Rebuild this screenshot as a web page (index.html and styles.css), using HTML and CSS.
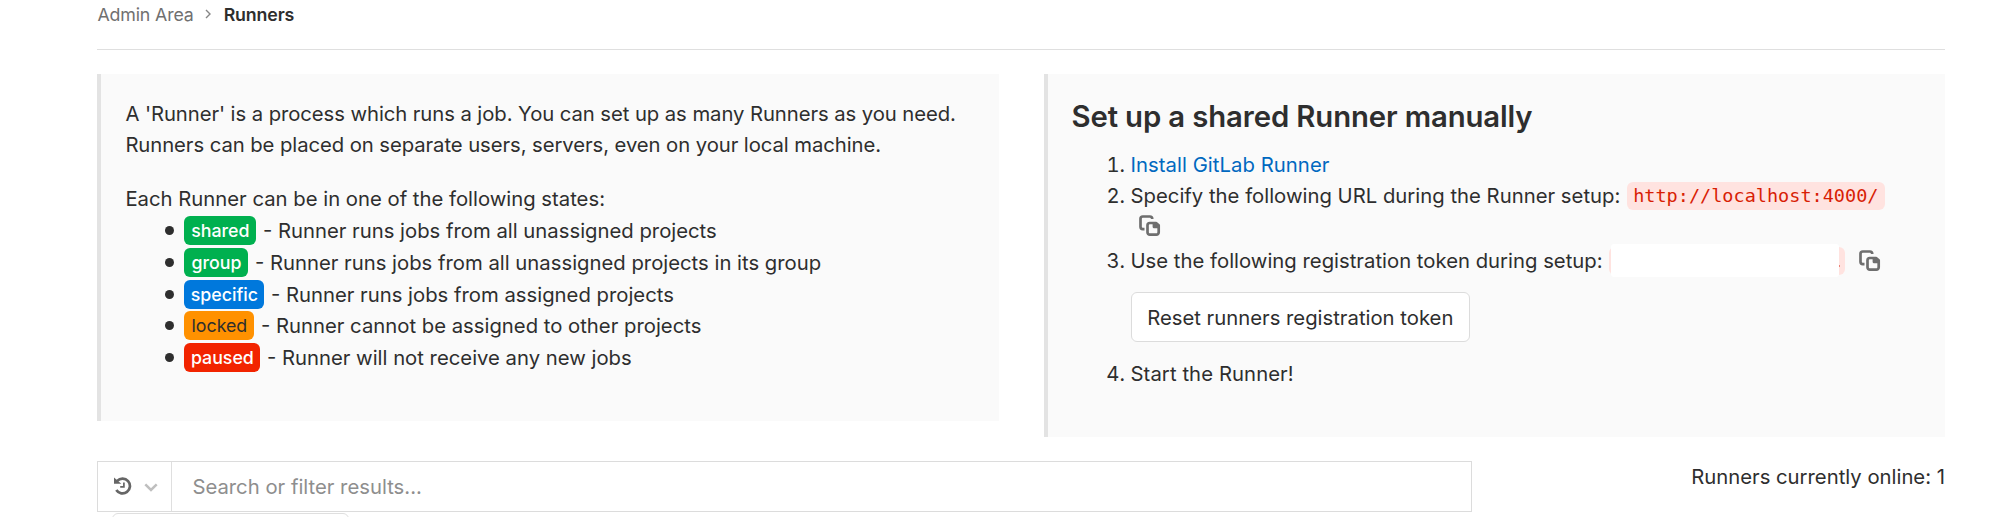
FILE: index.html
```html
<!DOCTYPE html>
<html lang="en">
<head>
<meta charset="utf-8">
<title>Runners</title>
<link rel="stylesheet" href="styles.css">
</head>
<body>
<svg width="0" height="0" class="defs">
  <symbol id="copy" viewBox="0 0 22 22">
    <path d="M13.200 4V3.800A2.300 2.300 0 0 0 10.900 1.500H3.800A2.300 2.300 0 0 0 1.500 3.800V11.800A2.300 2.300 0 0 0 3.800 14.100H5.500" fill="none" stroke="#6e6e6e" stroke-width="2.700"/>
    <path d="M10.800 8H17L19.700 10.300V17.300A2.300 2.300 0 0 1 17.400 19.600H10.800A2.300 2.300 0 0 1 8.500 17.300V10.300A2.300 2.300 0 0 1 10.800 8Z" fill="none" stroke="#6e6e6e" stroke-width="2.700" stroke-linejoin="round"/>
    <path d="M13.600 8H17L19.500 10.500V13.200H15.100A1.500 1.500 0 0 1 13.600 11.700Z" fill="#6e6e6e"/>
  </symbol>
</svg>
<div class="page">
  <nav class="breadcrumb">
    <a class="crumb">Admin Area</a>
    <svg class="crumb-sep" viewBox="0 0 6 10"><path d="M1 1l4 4-4 4" fill="none" stroke="#868686" stroke-width="1.400"/></svg>
    <strong>Runners</strong>
  </nav>
  <div class="panels">
    <section class="panel info">
      <p class="intro">A 'Runner' is a process which runs a job. You can set up as many Runners as you need.<br>Runners can be placed on separate users, servers, even on your local machine.</p>
      <p class="states-title">Each Runner can be in one of the following states:</p>
      <ul class="states">
        <li><span class="badge green shared">shared</span><span>- Runner runs jobs from all unassigned projects</span></li>
        <li><span class="badge green group">group</span><span>- Runner runs jobs from all unassigned projects in its group</span></li>
        <li><span class="badge blue specific">specific</span><span>- Runner runs jobs from assigned projects</span></li>
        <li><span class="badge orange locked">locked</span><span>- Runner cannot be assigned to other projects</span></li>
        <li><span class="badge red paused">paused</span><span>- Runner will not receive any new jobs</span></li>
      </ul>
    </section>
    <section class="panel setup">
      <h4>Set up a shared Runner manually</h4>
      <ol class="steps">
        <li><a class="link">Install GitLab Runner</a></li>
        <li>
          <div class="row"><span>Specify the following URL during the Runner setup:</span><code>http://localhost:4000/</code></div>
          <svg class="copy below"><use href="#copy"/></svg>
        </li>
        <li>
          <div class="row"><span>Use the following registration token during setup:</span><span class="token"><span class="mask"></span><span class="dot"></span></span><svg class="copy"><use href="#copy"/></svg></div>
          <button class="reset">Reset runners registration token</button>
        </li>
        <li class="start">Start the Runner!</li>
      </ol>
    </section>
  </div>
  <div class="filters">
    <div class="search">
      <div class="history">
        <svg class="clock" viewBox="0 0 18 18"><path d="M3.200 3.900A7.400 7.400 0 1 1 2.300 13" fill="none" stroke="#666" stroke-width="2.700"/><path d="M0 .5L7.300 6.800H0Z" fill="#666"/><path d="M9.900 5.500V9.900H6.200" fill="none" stroke="#666" stroke-width="1.700"/></svg>
        <svg class="chevron" viewBox="0 0 14 9"><path d="M1.300 1.300L7 7l5.700-5.700" fill="none" stroke="#bfbfbf" stroke-width="2.500"/></svg>
      </div>
      <span class="placeholder">Search or filter results...</span>
      <div class="dropdown"></div>
    </div>
    <div class="online">Runners currently online: 1</div>
  </div>
</div>
</body>
</html>
```
FILE: styles.css
```css
* { box-sizing: border-box; }
body {
  margin: 0;
  height: 517px;
  overflow: hidden;
  background: #fff;
  color: #2e2e2e;
  font: 20.3px/31.3px Inter, "Liberation Sans", sans-serif;
}
.defs { display: block; position: absolute; }
.page { padding: 0 55px 0 97.4px; }
.breadcrumb {
  display: flex;
  align-items: center;
  height: 50px;
  padding-bottom: 20.5px;
  border-bottom: 1px solid #dfdfdf;
  font-size: 17.8px;
  letter-spacing: -0.15px;
  white-space: nowrap;
}
.crumb { color: #707070; }
.crumb-sep { width: 6px; height: 10px; margin: 0 12.5px 0 11.500px; }
.breadcrumb strong { font-weight: 600; }
.panels {
  display: grid;
  grid-template-columns: 901.5px 901.5px;
  justify-content: space-between;
  align-items: start;
  margin-top: 24px;
}
.panel { border-left: 4.500px solid #e3e3e3; background: #fafafa; white-space: nowrap; }
.info { height: 346.500px; padding: 24px 24px 0; }
.setup { height: 363px; padding: 24px 24px 0; }
p { margin: 0; }
.intro { letter-spacing: -0.075px; }
.states-title { margin-top: 22.800px; }
.states, .steps { margin: 0; padding: 0; }
.states { list-style: none; padding-left: 40px; }
.states li { display: flex; align-items: center; height: 31.8px; }
.states li::before {
  content: "";
  width: 9px;
  height: 9px;
  margin-right: 10px;
  border-radius: 50%;
  background: #2e2e2e;
}
.badge {
  height: 29px;
  margin-right: 6.500px;
  border-radius: 6px;
  color: #fff;
  font-size: 17.8px;
  font-weight: 500;
  line-height: 30px;
  text-align: center;
}
.shared { width: 72px; }
.group { width: 64px; }
.specific { width: 80px; }
.locked { width: 70px; }
.paused { width: 76px; }
.green { background: #00b04f; }
.blue { background: #0078dc; }
.orange { background: #ff9100; color: #2e2e2e; font-weight: 400; }
.red { background: #f22400; }
h4 { margin: 0 0 13px; font-size: 29.300px; line-height: 38px; font-weight: 600; letter-spacing: -0.12px; }
.steps { padding-left: 59px; }
.link { color: #0068c0; letter-spacing: 0.05px; }
.row { display: flex; align-items: center; height: 31.300px; letter-spacing: 0.01px; }
code {
  width: 258px;
  height: 28px;
  margin-left: 6.500px;
  border-radius: 6px;
  background: #ffe3e0;
  color: #d81e05;
  font: 18.500px/28px "DejaVu Sans Mono", monospace;
  text-align: center;
}
.copy { display: block; width: 22px; height: 22px; }
.below { margin: 3.500px 0 8px 8.500px; }
.token {
  display: flex;
  align-items: center;
  width: 235.5px;
  height: 28px;
  margin: 0 14.5px 0 6.500px;
  border-radius: 6px;
  background: #ffe3e0;
}
.mask { width: 228.5px; height: 33px; margin-left: 1.500px; border-radius: 3px; background: #fff; }
.dot { width: 1px; height: 2px; margin-top: 11px; background: #ec8478; }
.reset {
  display: block;
  width: 339.5px;
  height: 50px;
  margin: 16px 0 16px;
  padding: 0;
  border: 1px solid #dcdcdc;
  border-radius: 6px;
  background: #fff;
  color: #2e2e2e;
  font: inherit;
}
.start { letter-spacing: 0.08px; }
.filters { display: flex; justify-content: space-between; margin-top: 23.500px; }
.search {
  position: relative;
  display: flex;
  align-items: center;
  width: 1374.5px;
  height: 51.500px;
  border: 1px solid #dcdcdc;
  background: #fff;
}
.history {
  display: flex;
  align-items: center;
  width: 74px;
  height: 100%;
  padding-left: 16px;
  border-right: 1px solid #dfdfdf;
}
.clock { width: 18px; height: 18px; }
.chevron { width: 14px; height: 9px; margin: 2px 0 0 12px; }
.placeholder { margin-left: 20px; color: #8e8e8e; }
.dropdown {
  position: absolute;
  top: 51px;
  left: 14px;
  width: 237px;
  height: 20px;
  border: 1px solid #dfdfdf;
  border-radius: 6px;
}
.online { white-space: nowrap; }
```
